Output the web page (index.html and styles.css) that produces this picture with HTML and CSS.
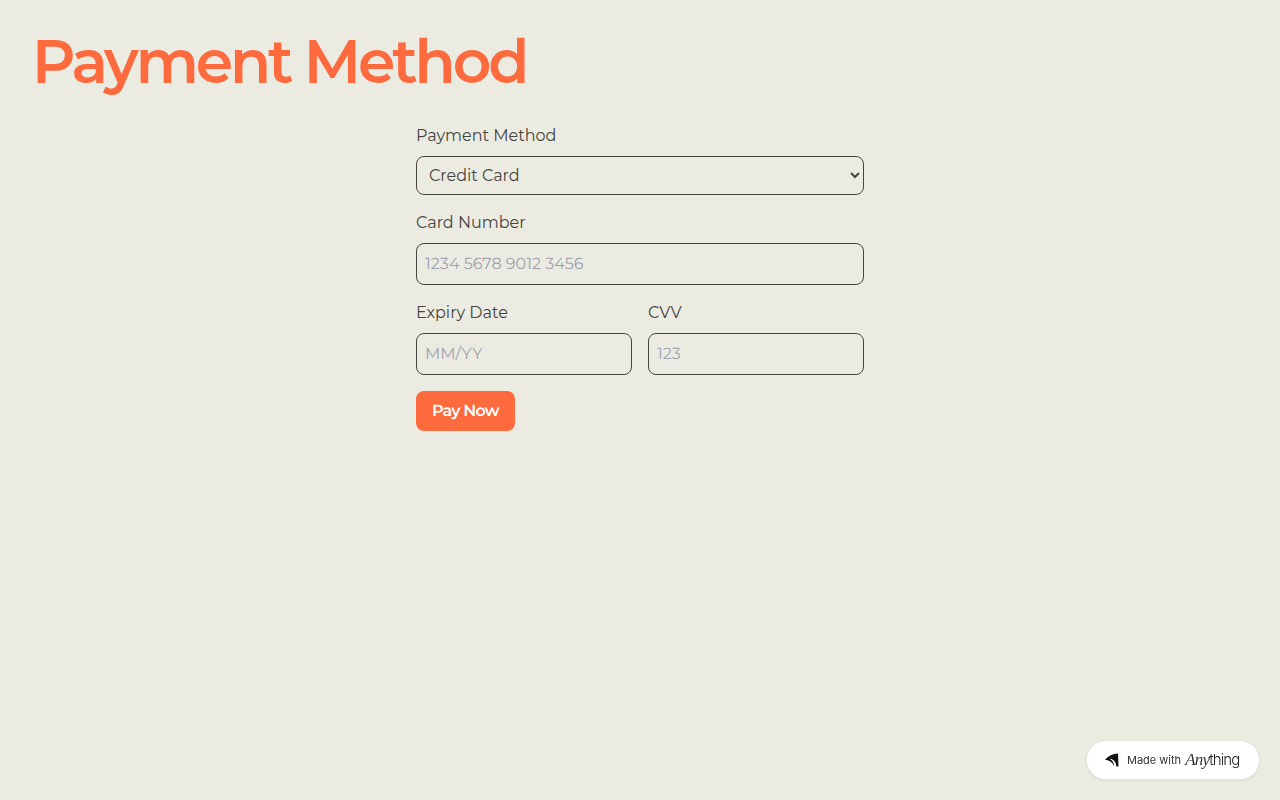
FILE: index.html
```html
<!DOCTYPE html>
<html lang="en">
<head>
<meta charset="utf-8">
<title>Payment Method</title>
<link rel="stylesheet" href="styles.css">
</head>
<body>
<main class="page">
  <h1 class="title">Payment Method</h1>
  <form class="form">
    <div class="field">
      <label class="label">Payment Method</label>
      <select class="select"><option>Credit Card</option></select>
    </div>
    <div class="field">
      <label class="label">Card Number</label>
      <input class="input" placeholder="1234 5678 9012 3456">
    </div>
    <div class="row">
      <div class="field">
        <label class="label">Expiry Date</label>
        <input class="input" placeholder="MM/YY">
      </div>
      <div class="field">
        <label class="label">CVV</label>
        <input class="input" placeholder="123">
      </div>
    </div>
    <button class="pay" type="button">Pay Now</button>
  </form>
</main>
<a class="badge">
  <svg class="badge-icon" width="14" height="14" viewBox="0 0 14 14"><path d="M0 6.8C3 3 8 .8 13 .5L13.5 13.5C12.6 13.8 11.8 13.5 11.2 13C11.2 9 8.5 5.6 3.6 5.7C6.8 6.4 9 9 9.2 13.2C7.8 9.8 4.5 7.2 0 6.8Z" fill="#111"/></svg>
  <span class="badge-text">Made with</span>
  <span class="badge-logo"><span class="logo-any">Any</span><span class="logo-thing">thing</span></span>
</a>
</body>
</html>
```
FILE: styles.css
```css
* { box-sizing: border-box; }
html, body { margin: 0; height: 100%; }
body {
  background: #ecebe2;
  font-family: Montserrat, Inter, "Liberation Sans", sans-serif;
  color: #454540;
}
.page { padding: 32px; }
.title {
  margin: 0 0 32px;
  font-size: 60px;
  line-height: 60px;
  font-weight: 600;
  letter-spacing: -3.1px;
  color: #fc6a3d;
}
.form {
  width: 448px;
  margin: 0 auto;
  display: flex;
  flex-direction: column;
  gap: 16px;
}
.field { display: flex; flex-direction: column; gap: 8px; min-width: 0; }
.row { display: grid; grid-template-columns: 1fr 1fr; gap: 16px; }
.label { font-size: 16px; line-height: 24px; }
.select, .input {
  width: 100%;
  font-family: inherit;
  font-size: 16px;
  color: #454540;
  background: transparent;
  border: 1px solid #454540;
  border-radius: 8px;
}
.select { height: 39px; padding: 8px; }
.input { height: 42px; padding: 8px; outline: none; text-rendering: geometricPrecision; }
.input::placeholder { color: #9ca3af; opacity: 1; }
.pay {
  align-self: flex-start;
  height: 40px;
  padding: 0 16px;
  border: 0;
  border-radius: 8px;
  background: #fc6a3d;
  color: #fff;
  font-family: inherit;
  font-size: 16px;
  font-weight: 600;
  letter-spacing: -0.8px;
  text-rendering: geometricPrecision;
}
.badge {
  position: fixed;
  right: 20px;
  bottom: 20px;
  width: 174px;
  height: 40px;
  display: flex;
  align-items: center;
  padding-left: 18px;
  background: #fff;
  border: 1px solid #e4e3dc;
  border-radius: 20px;
  box-shadow: 0 1px 3px rgba(0,0,0,.06);
}
.badge-icon { margin-right: 8px; }
.badge-text { font-family: Inter, sans-serif; font-size: 11px; color: #333; margin-right: 4px; }
.badge-logo { display: flex; align-items: baseline; color: #222; font-size: 15px; line-height: 16px; }
.logo-any { font-family: "Liberation Serif", serif; font-style: italic; font-size: 17px; letter-spacing: -0.8px; color: #333; }
.logo-thing { font-family: Inter, sans-serif; font-weight: 300; letter-spacing: -0.9px; }
```
